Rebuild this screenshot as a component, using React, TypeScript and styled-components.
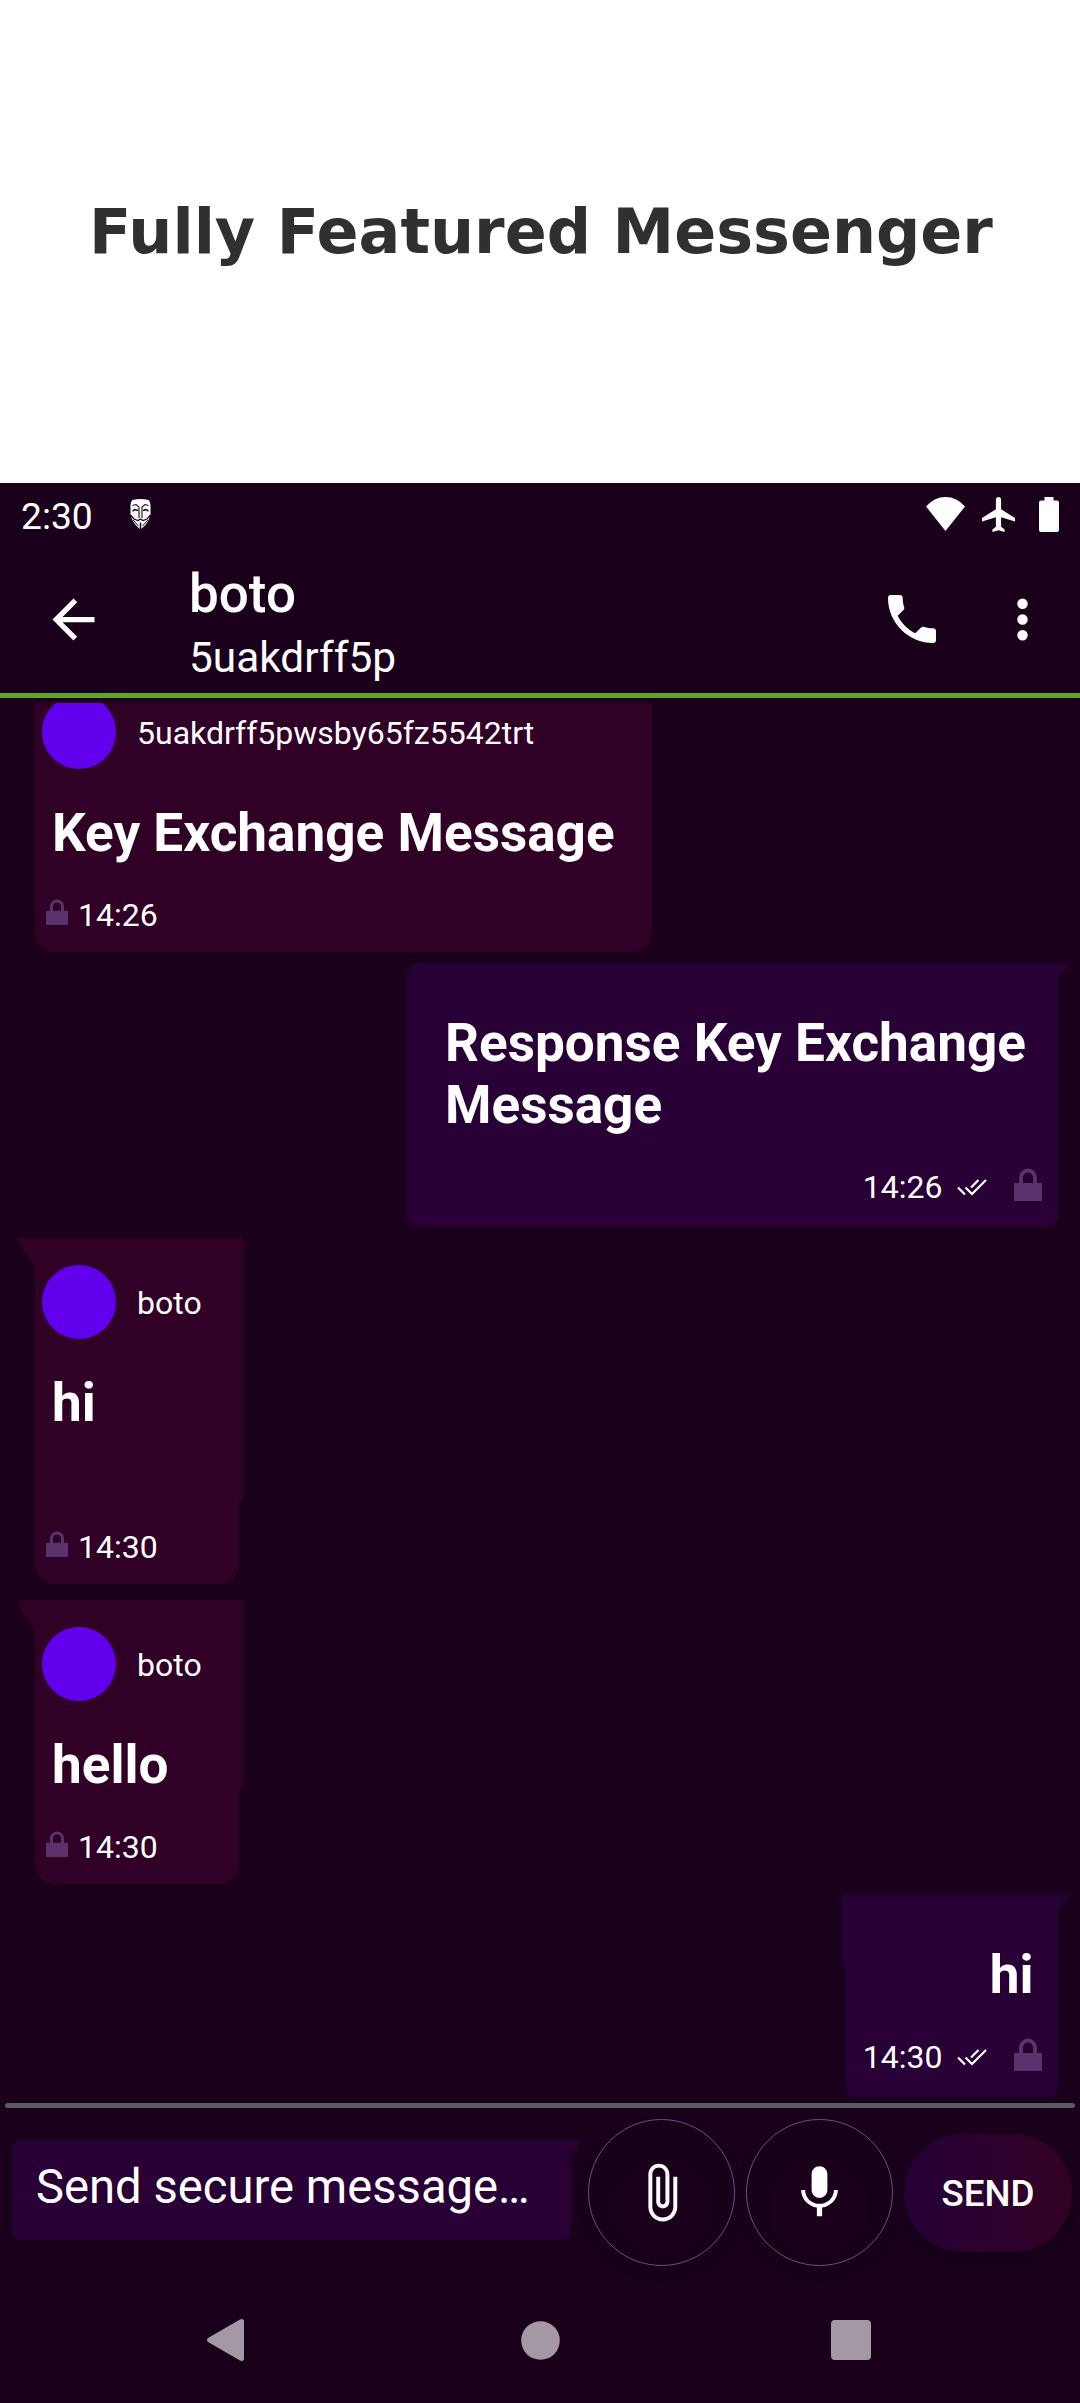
import React from "react";
import styled, { createGlobalStyle, css } from "styled-components";

const color = {
  bg: "#1a001b",
  incoming: "#300026",
  outgoing: "#280036",
  avatar: "#6200ee",
  accent: "#62a52b",
  lock: "#5b326c",
  nav: "#a498a5",
};

const GlobalStyle = createGlobalStyle`
  * { box-sizing: border-box; }
  body { margin: 0; background: #fff; }
`;

const Page = styled.div`
  display: flex;
  flex-direction: column;
  width: 1080px;
  height: 2403px;
  overflow: hidden;
  color: #fff;
  font-family: Roboto, "Noto Sans", sans-serif;
  font-size: 32px;
`;

const Headline = styled.h1`
  display: flex;
  align-items: center;
  justify-content: center;
  height: 483px;
  margin: 0;
  padding: 0 0 19px 2px;
  background: #fff;
  color: #303030;
  font: bold 61.95px/72px "DejaVu Sans", sans-serif;
  white-space: nowrap;
`;

const Phone = styled.main`
  display: flex;
  flex-direction: column;
  height: 1920px;
  background: ${color.bg};
`;

const StatusBar = styled.div`
  display: flex;
  align-items: center;
  height: 63px;
  padding: 0 21px;
`;

const Clock = styled.span`
  width: 109px;
  padding-top: 4px;
  font-size: 37.2px;
  line-height: 46px;
  white-space: nowrap;
`;

const StatusIcons = styled.div`
  display: flex;
  align-items: center;
  gap: 17px;
  margin-left: auto;

  svg + svg + svg {
    margin-left: 7px;
  }
`;

const AppBar = styled.header`
  display: flex;
  align-items: center;
  height: 152px;
  padding: 0 26px 0 42px;
  border-bottom: 5px solid ${color.accent};
`;

const Icon = styled.svg`
  display: block;
  flex: none;
  fill: #fff;
`;

const Titles = styled.div`
  display: flex;
  flex-direction: column;
  flex: 1;
  padding: 7px 0 0 84px;
`;

const Title = styled.div`
  height: 62px;
  font-size: 53px;
  font-weight: 500;
  line-height: 62px;
`;

const Subtitle = styled.div`
  margin-top: 8px;
  font-size: 42.4px;
  line-height: 50px;
`;

const Actions = styled.div`
  display: flex;
  align-items: center;
  gap: 47px;
`;

const Messages = styled.section`
  flex: none;
  display: flex;
  flex-direction: column;
  height: 1400px;
  margin-top: 5px;
  padding: 0 22px 0 35px;
  overflow: hidden;
`;

const bubbleBase = css<{ $gap: number }>`
  position: relative;
  flex: none;
  display: flex;
  flex-direction: column;
  margin-top: ${(p) => p.$gap}px;
`;

const Incoming = styled.article<{ $width: number; $gap: number; $ledge?: number }>`
  ${bubbleBase}
  align-self: flex-start;
  width: ${(p) => p.$width}px;
  padding: 27px 7px 18px;
  border-radius: 0 0 20px 20px;
  background: ${color.incoming};

  &::before {
    content: "";
    position: absolute;
    top: 0;
    left: -17px;
    width: 17px;
    height: 30px;
    background: ${color.incoming};
    clip-path: polygon(0 0, 100% 0, 100% 100%, 2px 8px, 0 4px);
  }

  &::after {
    content: "";
    position: absolute;
    top: 0;
    right: -4px;
    width: 4px;
    height: ${(p) => p.$ledge ?? 0}px;
    background: ${color.incoming};
    clip-path: polygon(0 0, 100% 0, 100% calc(100% - 3px), 0 100%);
  }
`;

const Outgoing = styled.article<{ $width: number; $gap: number; $ledge?: number }>`
  ${bubbleBase}
  align-self: flex-end;
  width: ${(p) => p.$width}px;
  padding: 49px 16.5px 21px 38px;
  border-radius: ${(p) => (p.$ledge ? "0" : "11px")} 0 11px 11px;
  background: ${color.outgoing};

  &::before {
    content: "";
    position: absolute;
    top: 0;
    right: -13px;
    width: 13px;
    height: 16px;
    background: ${color.outgoing};
    clip-path: polygon(0 0, 100% 0, 0 100%);
  }

  &::after {
    content: "";
    position: absolute;
    top: 0;
    left: -4px;
    width: 4px;
    height: ${(p) => p.$ledge ?? 0}px;
    background: ${color.outgoing};
    clip-path: polygon(0 0, 100% 0, 100% 100%, 0 calc(100% - 3px));
  }
`;

const Sender = styled.div`
  display: flex;
  align-items: center;
  height: 74px;
`;

const Avatar = styled.span`
  flex: none;
  width: 74px;
  height: 74px;
  margin-right: 21px;
  border-radius: 50%;
  background: ${color.avatar};
`;

const SenderName = styled.span`
  padding-top: 3px;
  line-height: 37px;
  white-space: nowrap;
`;

const Body = styled.p<{ $lines?: number }>`
  height: ${(p) => (p.$lines ?? 1) * 62}px;
  margin: 33px 0 33px 10px;
  font-size: 53.1px;
  font-weight: 700;
  line-height: 62px;
`;

const SentBody = styled(Body)<{ $end?: boolean }>`
  margin: 0 0 33px;
  padding-right: ${(p) => (p.$end ? 8 : 0)}px;
  text-align: ${(p) => (p.$end ? "right" : "left")};
`;

const Meta = styled.div<{ $end?: boolean }>`
  display: flex;
  align-items: center;
  justify-content: ${(p) => (p.$end ? "flex-end" : "flex-start")};
  height: 37px;
  padding-left: ${(p) => (p.$end ? 0 : 4)}px;
  line-height: 37px;
  white-space: nowrap;
`;

const Divider = styled.hr`
  flex: none;
  width: 1070px;
  height: 5px;
  margin: 0 5px;
  border: 0;
  border-radius: 2.5px;
  background: #5c5a62;
`;

const Composer = styled.form`
  display: flex;
  height: 170px;
  padding: 11px 8px 0 12px;
`;

const InputBubble = styled.label`
  position: relative;
  width: 559px;
  height: 100px;
  margin: 21px 17px 0 0;
  padding: 17.5px 0 0 24px;
  border-radius: 11px 0 11px 11px;
  background: ${color.outgoing};
  font-size: 47.2px;
  line-height: 60px;
  white-space: nowrap;

  &::before {
    content: "";
    position: absolute;
    top: 0;
    right: -12px;
    width: 12px;
    height: 15px;
    background: ${color.outgoing};
    clip-path: polygon(0 0, 100% 0, 0 100%);
  }
`;

const RoundButton = styled.button`
  display: flex;
  align-items: center;
  justify-content: center;
  width: 147px;
  height: 147px;
  margin-right: 11px;
  padding: 0;
  border: 1px solid #754a88;
  border-radius: 50%;
  background: #170018;
  box-shadow: 0 6px 12px rgba(0, 0, 0, 0.16);
`;

const ButtonFace = styled.span`
  display: flex;
  align-items: center;
  justify-content: center;
  width: 98px;
  height: 98px;
  margin-top: 33px;
  padding-bottom: 33px;
  background: ${color.bg};
  clip-path: polygon(29% 0, 71% 0, 100% 29%, 100% 71%, 71% 100%, 29% 100%, 0 71%, 0 29%);
`;

const SendButton = styled.button`
  width: 168px;
  height: 118px;
  margin: 15px 0 0;
  padding: 3px 0 0;
  border: 0;
  border-radius: 59px;
  background: linear-gradient(90deg, #260038, #2c002e 50%, #340024);
  box-shadow: 0 5px 7px rgba(0, 0, 0, 0.22);
  color: #fff;
  font: 500 36.75px/44px Roboto, sans-serif;
`;

const NavBar = styled.nav`
  display: grid;
  grid-template-columns: 314px 315px 307px;
  justify-content: center;
  align-items: center;
  justify-items: center;
  height: 126px;
  padding-right: 7px;
  svg {
    fill: ${color.nav};
  }
`;

const MaskIcon = () => (
  <Icon width="21" height="30" viewBox="0 0 21 30">
    <path d="M2.500 1Q10.500-1 18.500 1Q20.800 3 20.500 9V16Q19 22 15 26.500L11 30H10L6 26.500Q2 22 .5 16V9Q.2 3 2.500 1Z" />
    <g fill="none" stroke={color.bg}>
      <path d="M2.500 6.500L6 5.500L9 8V19M18.500 6.500L15 5.500L12 8V19" strokeWidth="1.100" />
      <path d="M2.500 12L5 10.500L8 11.500M18.500 12L16 10.500L13 11.500" strokeWidth="1.500" />
      <path d="M.5 16L4 20L8 21.500L10.500 20L13 21.500L17 20L20.500 16" strokeWidth="1.300" />
      <path d="M3 21L8.500 27M18 21L12.500 27" strokeWidth="1" />
      <path d="M10.500 23.500V30" strokeWidth="1.500" />
    </g>
  </Icon>
);

const LockIcon = ({ width, height, gap }: { width: number; height: number; gap: string }) => (
  <Icon width={width} height={height} viewBox="0 0 28 33" style={{ margin: gap }}>
    <path d="M7 16V9.500a7 7 0 0 1 14 0V16" fill="none" stroke={color.lock} strokeWidth="3.800" />
    <path d="M0 15H28V33H0Z" fill={color.lock} />
  </Icon>
);

const ReceivedMeta = ({ time }: { time: string }) => (
  <Meta>
    <LockIcon width={22} height={26} gap="0 10px 6px 0" />
    {time}
  </Meta>
);

const SentMeta = ({ time }: { time: string }) => (
  <Meta $end>
    {time}
    <Icon width="31" height="17" viewBox="0 0 31 17" style={{ margin: "0 26px 0 14px" }}>
      <path
        d="M1 8.500L8 15.500M8.500 8.500L15 15L29 1M14 8.500L21.500 1"
        fill="none"
        stroke="#fff"
        strokeWidth="2.200"
      />
    </Icon>
    <LockIcon width={28} height={33} gap="0 0 5px" />
  </Meta>
);

export default function App() {
  return (
    <Page>
      <GlobalStyle />
      <Headline>Fully Featured Messenger</Headline>
      <Phone>
        <StatusBar>
          <Clock>2:30</Clock>
          <MaskIcon />
          <StatusIcons>
            <Icon width="39" height="34" viewBox="0 0 39 34">
              <path d="M0 9.500Q8 0 19.500 0T39 9.500L19.500 34Z" />
            </Icon>
            <Icon width="33" height="35" viewBox="2 2 19 20" preserveAspectRatio="none">
              <path d="M21 16v-2l-8-5V3.500c0-.83-.67-1.500-1.500-1.500S10 2.670 10 3.500V9l-8 5v2l8-2.500V19l-2 1.500V22l3.500-1 3.500 1v-1.500L13 19v-5.500l8 2.500z" />
            </Icon>
            <Icon width="20" height="35" viewBox="0 0 20 35">
              <path d="M5.500 0H14.500V3.500H18Q20 3.500 20 5.500V33Q20 35 18 35H2Q0 35 0 33V5.500Q0 3.500 2 3.500H5.500Z" />
            </Icon>
          </StatusIcons>
        </StatusBar>
        <AppBar>
          <Icon width="63" height="63" viewBox="0 0 24 24">
            <path d="M20 11H7.830l5.590-5.590L12 4l-8 8 8 8 1.410-1.410L7.830 13H20v-2z" />
          </Icon>
          <Titles>
            <Title>boto</Title>
            <Subtitle>5uakdrff5p</Subtitle>
          </Titles>
          <Actions>
            <Icon width="64" height="64" viewBox="0 0 24 24">
              <path d="M6.620 10.790c1.440 2.830 3.760 5.140 6.590 6.590l2.200-2.200c.27-.27.67-.36 1.020-.24 1.120.37 2.330.57 3.570.57.550 0 1 .45 1 1V20c0 .55-.45 1-1 1-9.390 0-17-7.610-17-17 0-.55.450-1 1-1h3.500c.55 0 1 .45 1 1 0 1.250.2 2.450.57 3.570.11.350.03.740-.25 1.020l-2.200 2.200z" />
            </Icon>
            <Icon width="63" height="63" viewBox="0 0 24 24">
              <path d="M12 8a2 2 0 1 0 0-4 2 2 0 0 0 0 4zm0 2a2 2 0 1 0 0 4 2 2 0 0 0 0-4zm0 6a2 2 0 1 0 0 4 2 2 0 0 0 0-4z" />
            </Icon>
          </Actions>
        </AppBar>
        <Messages>
          <Incoming $width={617} $gap={-35}>
            <Sender>
              <Avatar />
              <SenderName>5uakdrff5pwsby65fz5542trt</SenderName>
            </Sender>
            <Body>Key Exchange Message</Body>
            <ReceivedMeta time="14:26" />
          </Incoming>
          <Outgoing $width={651} $gap={11}>
            <SentBody $lines={2}>Response Key Exchange Message</SentBody>
            <SentMeta time="14:26" />
          </Outgoing>
          <Incoming $width={204} $gap={11} $ledge={265}>
            <Sender>
              <Avatar />
              <SenderName>boto</SenderName>
            </Sender>
            <Body $lines={2}>hi</Body>
            <ReceivedMeta time="14:30" />
          </Incoming>
          <Incoming $width={204} $gap={16} $ledge={190}>
            <Sender>
              <Avatar />
              <SenderName>boto</SenderName>
            </Sender>
            <Body>hello</Body>
            <ReceivedMeta time="14:30" />
          </Incoming>
          <Outgoing $width={212} $gap={11} $ledge={75}>
            <SentBody $end>hi</SentBody>
            <SentMeta time="14:30" />
          </Outgoing>
        </Messages>
        <Divider />
        <Composer>
          <InputBubble>Send secure message…</InputBubble>
          <RoundButton type="button" aria-label="Attach">
            <ButtonFace>
              <Icon width="63" height="63" viewBox="0 0 24 24">
                <path d="M16.500 6v11.500c0 2.210-1.790 4-4 4s-4-1.790-4-4V5c0-1.380 1.120-2.500 2.500-2.500s2.500 1.120 2.500 2.500v10.500c0 .55-.45 1-1 1s-1-.45-1-1V6H10v9.500c0 1.380 1.120 2.500 2.500 2.500s2.500-1.120 2.500-2.500V5c0-2.210-1.790-4-4-4S7 2.790 7 5v12.500c0 3.040 2.460 5.500 5.500 5.500s5.500-2.460 5.500-5.500V6h-1.500z" />
              </Icon>
            </ButtonFace>
          </RoundButton>
          <RoundButton type="button" aria-label="Record">
            <ButtonFace>
              <Icon width="63" height="63" viewBox="0 0 24 24">
                <path d="M12 14c1.660 0 3-1.340 3-3V5c0-1.660-1.340-3-3-3S9 3.340 9 5v6c0 1.660 1.340 3 3 3zm5.500-3c0 3-2.500 5.300-5.500 5.300S6.500 14 6.500 11H5c0 3.410 2.720 6.230 6 6.720V21h2v-3.280c3.280-.49 6-3.310 6-6.720h-1.500z" />
              </Icon>
            </ButtonFace>
          </RoundButton>
          <SendButton type="button">SEND</SendButton>
        </Composer>
        <NavBar>
          <Icon width="37" height="42" viewBox="0 0 37 42">
            <path d="M33 .5Q37-1 37 3V39Q37 43 33 41.500L1 23Q-1 21 1 19Z" />
          </Icon>
          <Icon width="39" height="39" viewBox="0 0 39 39">
            <circle cx="19.500" cy="19.500" r="19.300" />
          </Icon>
          <Icon width="40" height="40" viewBox="0 0 40 40">
            <rect width="40" height="40" rx="4" />
          </Icon>
        </NavBar>
      </Phone>
    </Page>
  );
}
